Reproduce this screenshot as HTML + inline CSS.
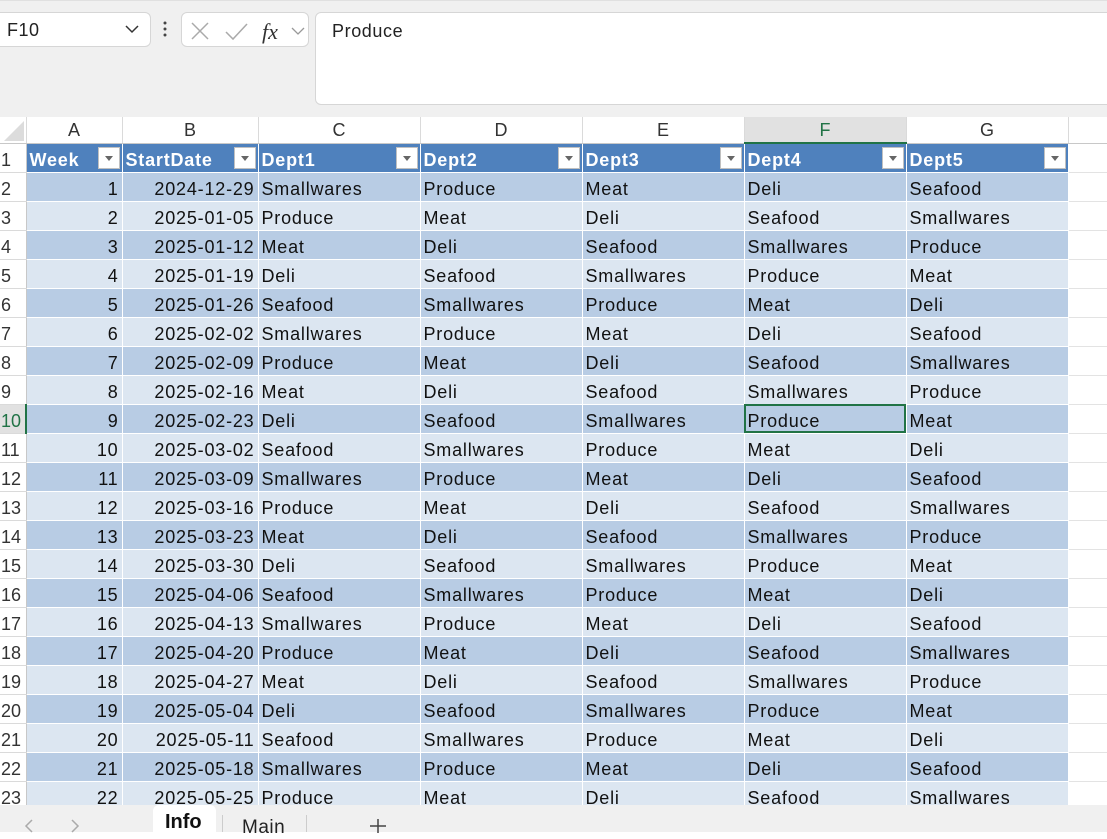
<!DOCTYPE html>
<html><head><meta charset="utf-8"><style>
*{box-sizing:border-box;margin:0;padding:0}
body{width:1107px;height:832px;overflow:hidden;background:#fff;font-family:"Liberation Sans",sans-serif;position:relative}
.top{position:absolute;left:0;top:0;width:1107px;height:117px;background:#f0f0f0;border-top:1px solid #e0e0e0}
.nb{position:absolute;left:-6px;top:12px;width:157px;height:35px;background:#fff;border:1px solid #d6d6d6;border-radius:6px;font-size:18px;padding:7px 0 0 12px;color:#222;letter-spacing:0.5px}
.fb{position:absolute;left:181px;top:12px;width:128px;height:35px;background:#fff;border:1px solid #d6d6d6;border-radius:6px}
.fi{position:absolute;left:315px;top:12px;width:800px;height:93px;background:#fff;border:1px solid #d6d6d6;border-radius:6px;font-size:18px;padding:8px 0 0 16px;color:#222;letter-spacing:0.6px}
table{position:absolute;left:0;top:117px;border-collapse:collapse;table-layout:fixed;font-size:18px;letter-spacing:0.8px}
td{height:29px;padding:5px 3px 0 3px;white-space:nowrap;overflow:hidden;border:1px solid #fff;color:#111;line-height:22px}
tr.h td{height:26px;line-height:24px;padding:1px 0 0 0;border:none;border-right:1px solid #dadada;border-bottom:1px solid #c8c8c8;text-align:center;color:#333;background:#fff;letter-spacing:0}
td.r{background:#fff;color:#333;border:none;border-bottom:1px solid #dadada;border-right:1px solid #c8c8c8;padding:5px 0 0 1px;text-align:left;letter-spacing:0}
tr.t td{background:#4f81bd;color:#fff;font-weight:bold;position:relative}
tr.t td.r{background:#fff;color:#333;font-weight:normal}
tr.o td{background:#b8cce4}tr.e td{background:#dce6f1}
tr.o td.r,tr.e td.r{background:#fff}
td.n{text-align:right}
td.x{background:#fff!important;border:none;border-bottom:1px solid #e3e3e3}
.dd{position:absolute;right:2px;top:3px;width:22px;height:22px;background:#fff;border:1px solid #c0c0c0}
.dd:after{content:"";position:absolute;left:6px;top:8px;border-left:4px solid transparent;border-right:4px solid transparent;border-top:5px solid #666}
.sel{outline:2px solid #217346;outline-offset:-2px}
.tabs{position:absolute;left:0;top:805px;width:1107px;height:27px;background:#f0f0f0}
</style></head><body>
<div class="top"></div>
<div class="nb">F10<svg style="position:absolute;left:130px;top:12px" width="14" height="9"><path d="M1 1l6 6 6-6" stroke="#333" stroke-width="1.5" fill="none"/></svg></div>
<svg style="position:absolute;left:163px;top:21px" width="4" height="17"><circle cx="2" cy="2" r="1.5" fill="#444"/><circle cx="2" cy="8" r="1.5" fill="#444"/><circle cx="2" cy="14" r="1.5" fill="#444"/></svg>
<div class="fb"><svg width="128" height="35"><path d="M10 10l16 16M26 10l-16 16" stroke="#aaa" stroke-width="1.5"/><path d="M44 19l7 7 14-15" stroke="#aaa" stroke-width="1.5" fill="none"/><text x="80" y="26" font-family="Liberation Serif" font-style="italic" font-size="22" fill="#333">fx</text><path d="M110 15l6 6 6-6" stroke="#999" stroke-width="1.3" fill="none"/></svg></div>
<div class="fi">Produce</div>
<svg style="position:absolute;left:3px;top:121px" width="21" height="20"><path d="M21 0V20H1z" fill="#dcdcdc"/></svg>
<table>
<colgroup><col style="width:26px"><col style="width:96px"><col style="width:136px"><col style="width:162px"><col style="width:162px"><col style="width:162px"><col style="width:162px"><col style="width:162px"><col style="width:39px"></colgroup>
<tr class="h"><td style="background:transparent"></td><td>A</td><td>B</td><td>C</td><td>D</td><td>E</td><td style="background:#e1e1e1;color:#217346;border-bottom:2px solid #217346">F</td><td>G</td><td style="border-right:none"></td></tr>
<tr class="t"><td class="r">1</td><td>Week<span class="dd"></span></td><td>StartDate<span class="dd"></span></td><td>Dept1<span class="dd"></span></td><td>Dept2<span class="dd"></span></td><td>Dept3<span class="dd"></span></td><td>Dept4<span class="dd"></span></td><td>Dept5<span class="dd"></span></td><td class="x"></td></tr>
<tr class="o"><td class="r">2</td><td class="n">1</td><td class="n">2024-12-29</td><td>Smallwares</td><td>Produce</td><td>Meat</td><td>Deli</td><td>Seafood</td><td class="x"></td></tr>
<tr class="e"><td class="r">3</td><td class="n">2</td><td class="n">2025-01-05</td><td>Produce</td><td>Meat</td><td>Deli</td><td>Seafood</td><td>Smallwares</td><td class="x"></td></tr>
<tr class="o"><td class="r">4</td><td class="n">3</td><td class="n">2025-01-12</td><td>Meat</td><td>Deli</td><td>Seafood</td><td>Smallwares</td><td>Produce</td><td class="x"></td></tr>
<tr class="e"><td class="r">5</td><td class="n">4</td><td class="n">2025-01-19</td><td>Deli</td><td>Seafood</td><td>Smallwares</td><td>Produce</td><td>Meat</td><td class="x"></td></tr>
<tr class="o"><td class="r">6</td><td class="n">5</td><td class="n">2025-01-26</td><td>Seafood</td><td>Smallwares</td><td>Produce</td><td>Meat</td><td>Deli</td><td class="x"></td></tr>
<tr class="e"><td class="r">7</td><td class="n">6</td><td class="n">2025-02-02</td><td>Smallwares</td><td>Produce</td><td>Meat</td><td>Deli</td><td>Seafood</td><td class="x"></td></tr>
<tr class="o"><td class="r">8</td><td class="n">7</td><td class="n">2025-02-09</td><td>Produce</td><td>Meat</td><td>Deli</td><td>Seafood</td><td>Smallwares</td><td class="x"></td></tr>
<tr class="e"><td class="r">9</td><td class="n">8</td><td class="n">2025-02-16</td><td>Meat</td><td>Deli</td><td>Seafood</td><td>Smallwares</td><td>Produce</td><td class="x"></td></tr>
<tr class="o"><td class="r" style="background:#e1e1e1;color:#217346;border-right:2px solid #217346">10</td><td class="n">9</td><td class="n">2025-02-23</td><td>Deli</td><td>Seafood</td><td>Smallwares</td><td class="sel">Produce</td><td>Meat</td><td class="x"></td></tr>
<tr class="e"><td class="r">11</td><td class="n">10</td><td class="n">2025-03-02</td><td>Seafood</td><td>Smallwares</td><td>Produce</td><td>Meat</td><td>Deli</td><td class="x"></td></tr>
<tr class="o"><td class="r">12</td><td class="n">11</td><td class="n">2025-03-09</td><td>Smallwares</td><td>Produce</td><td>Meat</td><td>Deli</td><td>Seafood</td><td class="x"></td></tr>
<tr class="e"><td class="r">13</td><td class="n">12</td><td class="n">2025-03-16</td><td>Produce</td><td>Meat</td><td>Deli</td><td>Seafood</td><td>Smallwares</td><td class="x"></td></tr>
<tr class="o"><td class="r">14</td><td class="n">13</td><td class="n">2025-03-23</td><td>Meat</td><td>Deli</td><td>Seafood</td><td>Smallwares</td><td>Produce</td><td class="x"></td></tr>
<tr class="e"><td class="r">15</td><td class="n">14</td><td class="n">2025-03-30</td><td>Deli</td><td>Seafood</td><td>Smallwares</td><td>Produce</td><td>Meat</td><td class="x"></td></tr>
<tr class="o"><td class="r">16</td><td class="n">15</td><td class="n">2025-04-06</td><td>Seafood</td><td>Smallwares</td><td>Produce</td><td>Meat</td><td>Deli</td><td class="x"></td></tr>
<tr class="e"><td class="r">17</td><td class="n">16</td><td class="n">2025-04-13</td><td>Smallwares</td><td>Produce</td><td>Meat</td><td>Deli</td><td>Seafood</td><td class="x"></td></tr>
<tr class="o"><td class="r">18</td><td class="n">17</td><td class="n">2025-04-20</td><td>Produce</td><td>Meat</td><td>Deli</td><td>Seafood</td><td>Smallwares</td><td class="x"></td></tr>
<tr class="e"><td class="r">19</td><td class="n">18</td><td class="n">2025-04-27</td><td>Meat</td><td>Deli</td><td>Seafood</td><td>Smallwares</td><td>Produce</td><td class="x"></td></tr>
<tr class="o"><td class="r">20</td><td class="n">19</td><td class="n">2025-05-04</td><td>Deli</td><td>Seafood</td><td>Smallwares</td><td>Produce</td><td>Meat</td><td class="x"></td></tr>
<tr class="e"><td class="r">21</td><td class="n">20</td><td class="n">2025-05-11</td><td>Seafood</td><td>Smallwares</td><td>Produce</td><td>Meat</td><td>Deli</td><td class="x"></td></tr>
<tr class="o"><td class="r">22</td><td class="n">21</td><td class="n">2025-05-18</td><td>Smallwares</td><td>Produce</td><td>Meat</td><td>Deli</td><td>Seafood</td><td class="x"></td></tr>
<tr class="e"><td class="r">23</td><td class="n">22</td><td class="n">2025-05-25</td><td>Produce</td><td>Meat</td><td>Deli</td><td>Seafood</td><td>Smallwares</td><td class="x"></td></tr>
</table>
<div class="tabs">
<svg style="position:absolute;left:22px;top:14px" width="70" height="14"><path d="M10 1l-6 6 6 6M50 1l6 6-6 6" stroke="#aaa" stroke-width="1.5" fill="none"/></svg>
<div style="position:absolute;left:153px;top:0;width:63px;height:27px;background:#fff;border-radius:6px 6px 0 0;font-size:20px;font-weight:bold;padding:6px 0 0 12px;color:#111">Info</div>
<div style="position:absolute;left:222px;top:10px;width:1px;height:17px;background:#ccc"></div>
<div style="position:absolute;left:242px;top:12px;font-size:19px;color:#222;letter-spacing:0.5px">Main</div>
<div style="position:absolute;left:306px;top:10px;width:1px;height:17px;background:#ccc"></div>
<svg style="position:absolute;left:369px;top:14px" width="18" height="14"><path d="M9 0v14M1 7h16" stroke="#444" stroke-width="1.5"/></svg>
</div>
</body></html>
